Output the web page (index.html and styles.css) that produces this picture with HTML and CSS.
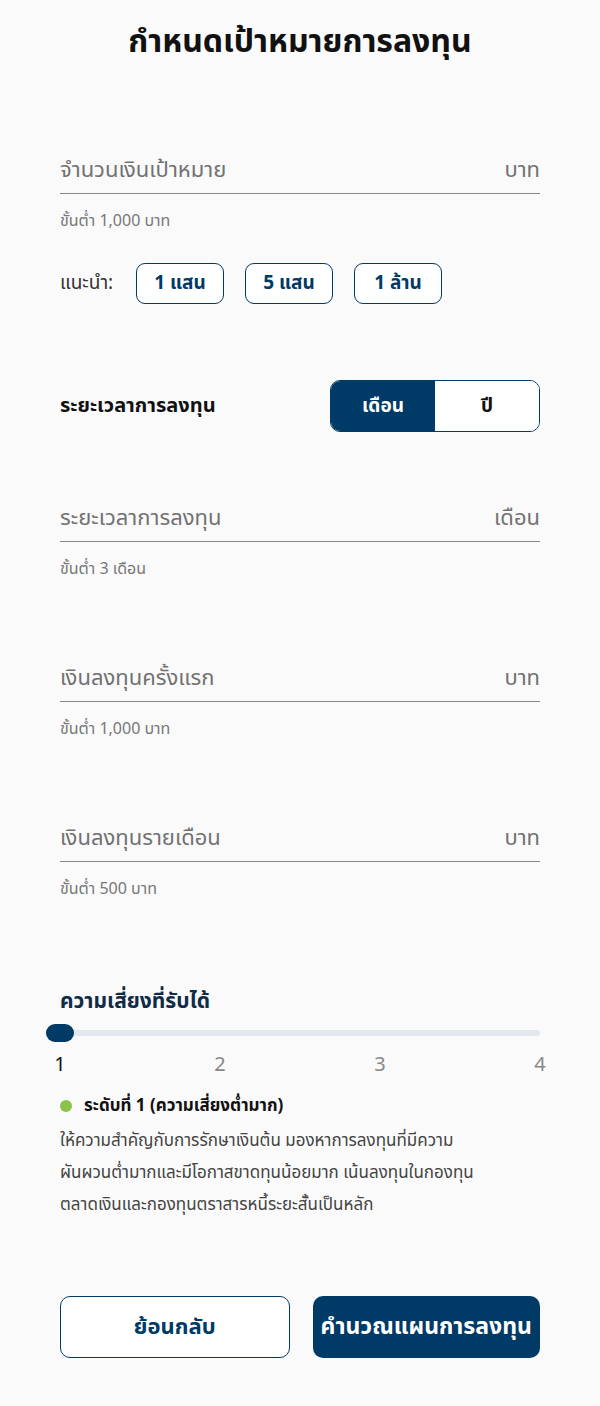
FILE: index.html
```html
<!DOCTYPE html>
<html lang="th">
  <head>
    <meta charset="UTF-8" />
    <meta name="viewport" content="width=device-width, initial-scale=1.0" />
    <title>กำหนดเป้าหมายการลงทุน</title>
    <link rel="stylesheet" href="styles.css">
  </head>

  <body>
    <div class="page">
      <h1 class="title">กำหนดเป้าหมายการลงทุน</h1>

      <div class="field first">
        <div class="line">
          <span class="placeholder">จำนวนเงินเป้าหมาย</span>
          <span class="unit">บาท</span>
        </div>
        <div class="hint">ขั้นต่ำ 1,000 บาท</div>
      </div>

      <div class="suggest">
        <span class="suggest-label">แนะนำ:</span>
        <button class="chip">1 แสน</button>
        <button class="chip">5 แสน</button>
        <button class="chip">1 ล้าน</button>
      </div>

      <div class="period">
        <span class="section-title">ระยะเวลาการลงทุน</span>
        <div class="toggle">
          <button class="toggle-btn active">เดือน</button>
          <button class="toggle-btn">ปี</button>
        </div>
      </div>

      <div class="field after-toggle">
        <div class="line">
          <span class="placeholder">ระยะเวลาการลงทุน</span>
          <span class="unit">เดือน</span>
        </div>
        <div class="hint">ขั้นต่ำ 3 เดือน</div>
      </div>

      <div class="field">
        <div class="line">
          <span class="placeholder">เงินลงทุนครั้งแรก</span>
          <span class="unit">บาท</span>
        </div>
        <div class="hint">ขั้นต่ำ 1,000 บาท</div>
      </div>

      <div class="field">
        <div class="line">
          <span class="placeholder">เงินลงทุนรายเดือน</span>
          <span class="unit">บาท</span>
        </div>
        <div class="hint">ขั้นต่ำ 500 บาท</div>
      </div>

      <div class="risk">
        <div class="risk-title">ความเสี่ยงที่รับได้</div>
        <div class="slider">
          <div class="track"></div>
          <div class="thumb"></div>
        </div>
        <div class="ticks">
          <span class="tick current">1</span>
          <span class="tick">2</span>
          <span class="tick">3</span>
          <span class="tick">4</span>
        </div>
        <div class="level">
          <span class="dot"></span>
          <span>ระดับที่ 1 (ความเสี่ยงต่ำมาก)</span>
        </div>
        <p class="desc">ให้ความสำคัญกับการรักษาเงินต้น มองหาการลงทุนที่มีความ<br>ผันผวนต่ำมากและมีโอกาสขาดทุนน้อยมาก เน้นลงทุนในกองทุน<br>ตลาดเงินและกองทุนตราสารหนี้ระยะสั้นเป็นหลัก</p>
      </div>

      <div class="actions">
        <button class="btn outline">ย้อนกลับ</button>
        <button class="btn solid">คำนวณแผนการลงทุน</button>
      </div>
    </div>
  </body>
</html>
```

FILE: styles.css
```css
*,
*::before,
*::after {
  box-sizing: border-box;
}

body {
  margin: 0;
  background-color: #fafafa;
  font-family: "Noto Sans Thai", "Noto Sans", sans-serif;
  color: #1a1a1a;
}

button {
  font-family: inherit;
  cursor: pointer;
}

.page {
  width: 600px;
  padding: 0 60px;
}

.title {
  margin: 0;
  padding-top: 20px;
  text-align: center;
  font-size: 32px;
  font-weight: 700;
  line-height: 44px;
  color: #111;
}

.field {
  margin-top: 81px;
}

.field.first {
  margin-top: 90px;
}

.field.after-toggle {
  margin-top: 70px;
}

.line {
  display: flex;
  justify-content: space-between;
  align-items: flex-end;
  height: 40px;
  padding-bottom: 6px;
  border-bottom: 1.5px solid #888;
  font-size: 22px;
  color: #727272;
}

.hint {
  margin-top: 15px;
  font-size: 16px;
  color: #777;
}

.suggest {
  display: flex;
  align-items: center;
  gap: 21px;
  margin-top: 30px;
}

.suggest-label {
  flex-shrink: 0;
  width: 55px;
  font-size: 19px;
  color: #333;
}

.chip {
  width: 88px;
  height: 41px;
  background: #fff;
  border: 1.5px solid #003a66;
  border-radius: 9px;
  font-size: 19px;
  font-weight: 700;
  color: #003a66;
}

.period {
  display: flex;
  justify-content: space-between;
  align-items: center;
  margin-top: 76px;
}

.section-title {
  font-size: 20px;
  font-weight: 700;
  color: #111;
}

.toggle {
  display: flex;
  width: 210px;
  height: 52px;
  border: 1.5px solid #003a66;
  border-radius: 10px;
  overflow: hidden;
  background: #fff;
}

.toggle-btn {
  flex: 1;
  border: 0;
  background: #fff;
  font-size: 19px;
  font-weight: 700;
  color: #111;
}

.toggle-btn.active {
  background: #003a66;
  color: #fff;
}

.risk {
  margin-top: 85px;
}

.risk-title {
  font-size: 21px;
  font-weight: 700;
  color: #0f2b47;
}

.slider {
  position: relative;
  height: 18px;
  margin-top: 7px;
  margin-left: -14px;
}

.track {
  position: absolute;
  left: 0;
  right: 0;
  top: 6px;
  height: 6px;
  border-radius: 3px;
  background: #e3e8ef;
}

.thumb {
  position: absolute;
  left: 0;
  top: 0;
  width: 28px;
  height: 18px;
  border-radius: 9px;
  background: #003a66;
}

.ticks {
  display: flex;
  justify-content: space-between;
  margin: 8px -10px 0;
  font-size: 20px;
  color: #888;
}

.tick {
  width: 20px;
  text-align: center;
}

.tick.current {
  color: #111;
}

.level {
  display: flex;
  align-items: center;
  gap: 12px;
  margin-top: 13px;
  font-size: 17px;
  font-weight: 700;
  color: #111;
}

.dot {
  width: 12px;
  height: 12px;
  border-radius: 50%;
  background: #8bc34a;
}

.desc {
  margin: 6px 0 0;
  font-size: 17px;
  line-height: 32px;
  color: #444;
  white-space: nowrap;
}

.actions {
  display: flex;
  gap: 23px;
  margin-top: 75px;
}

.btn {
  flex: 1 1 0;
  min-width: 0;
  height: 62px;
  padding: 0;
  border-radius: 10px;
  font-size: 22px;
  font-weight: 700;
}

.btn.outline {
  background: #fff;
  border: 1.5px solid #003a66;
  color: #003a66;
}

.btn.solid {
  background: #003a66;
  border: 0;
  color: #fff;
  white-space: nowrap;
  font-size: 23px;
}
```
